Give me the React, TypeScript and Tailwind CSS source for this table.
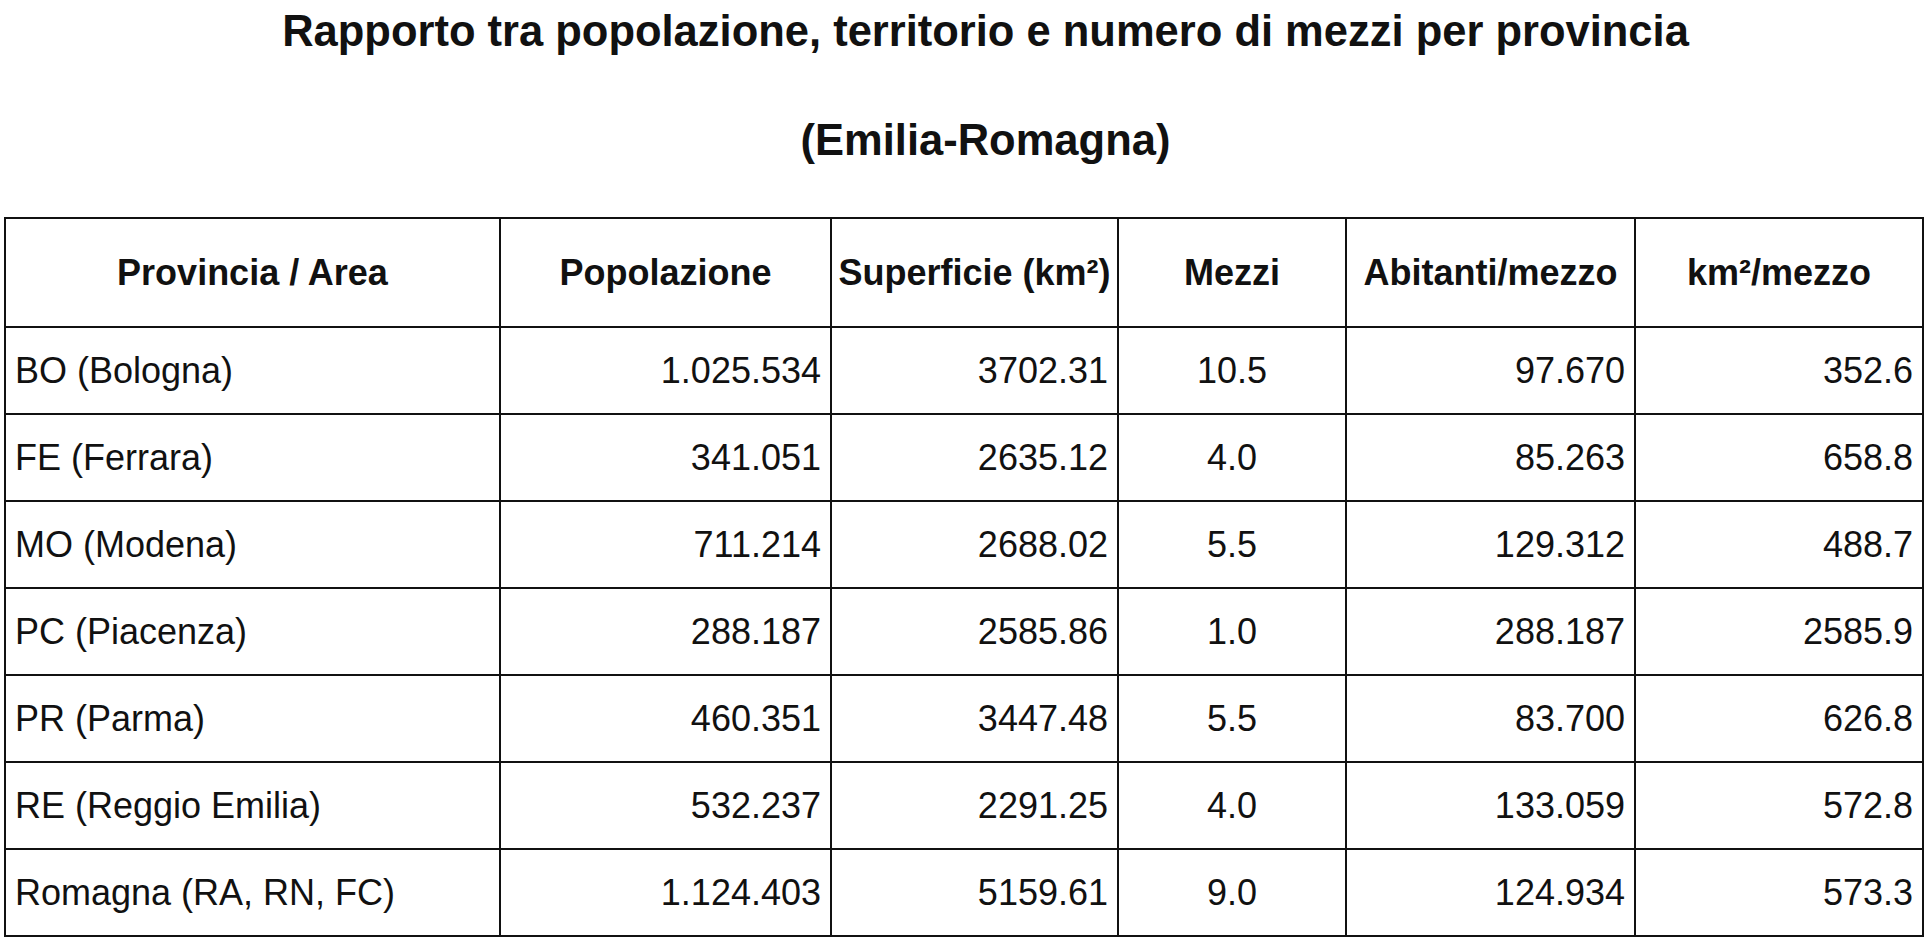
type Row = {
  area: string;
  pop: string;
  sup: string;
  mezzi: string;
  abit: string;
  km: string;
};

const rows: Row[] = [
  { area: "BO (Bologna)", pop: "1.025.534", sup: "3702.31", mezzi: "10.5", abit: "97.670", km: "352.6" },
  { area: "FE (Ferrara)", pop: "341.051", sup: "2635.12", mezzi: "4.0", abit: "85.263", km: "658.8" },
  { area: "MO (Modena)", pop: "711.214", sup: "2688.02", mezzi: "5.5", abit: "129.312", km: "488.7" },
  { area: "PC (Piacenza)", pop: "288.187", sup: "2585.86", mezzi: "1.0", abit: "288.187", km: "2585.9" },
  { area: "PR (Parma)", pop: "460.351", sup: "3447.48", mezzi: "5.5", abit: "83.700", km: "626.8" },
  { area: "RE (Reggio Emilia)", pop: "532.237", sup: "2291.25", mezzi: "4.0", abit: "133.059", km: "572.8" },
  { area: "Romagna (RA, RN, FC)", pop: "1.124.403", sup: "5159.61", mezzi: "9.0", abit: "124.934", km: "573.3" },
];

const headers = [
  "Provincia / Area",
  "Popolazione",
  "Superficie (km²)",
  "Mezzi",
  "Abitanti/mezzo",
  "km²/mezzo",
];

export default function App() {
  const td = "border-2 border-[#111] px-[9px] h-[87px] text-[36px] font-normal";
  return (
    <div className="min-h-screen bg-white text-[#111] font-['Liberation_Sans',Arial,sans-serif]">
      <h1 className="pt-[6px] pl-[42px] text-center text-[43.5px] font-bold leading-[50px]">
        Rapporto tra popolazione, territorio e numero di mezzi per provincia
      </h1>
      <h2 className="mt-[59px] pl-[42px] text-center text-[43.5px] font-bold leading-[50px]">
        (Emilia-Romagna)
      </h2>

      <table className="mt-[52px] ml-[4px] w-[1919px] table-fixed border-collapse">
        <colgroup>
          <col className="w-[495px]" />
          <col className="w-[331px]" />
          <col className="w-[287px]" />
          <col className="w-[228px]" />
          <col className="w-[289px]" />
          <col className="w-[288px]" />
        </colgroup>
        <thead>
          <tr>
            {headers.map((h) => (
              <th
                key={h}
                className="border-2 border-[#111] h-[109px] px-[6px] text-center text-[36px] font-bold whitespace-nowrap"
              >
                {h}
              </th>
            ))}
          </tr>
        </thead>
        <tbody>
          {rows.map((r) => (
            <tr key={r.area}>
              <td className={`${td} text-left`}>{r.area}</td>
              <td className={`${td} text-right`}>{r.pop}</td>
              <td className={`${td} text-right`}>{r.sup}</td>
              <td className={`${td} text-center`}>{r.mezzi}</td>
              <td className={`${td} text-right`}>{r.abit}</td>
              <td className={`${td} text-right`}>{r.km}</td>
            </tr>
          ))}
        </tbody>
      </table>
    </div>
  );
}
